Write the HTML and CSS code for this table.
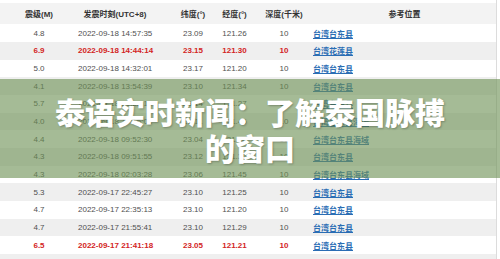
FILE: index.html
```html
<!DOCTYPE html>
<html lang="zh-CN">
<head>
<meta charset="utf-8">
<title>泰语实时新闻</title>
<link rel="stylesheet" href="styles.css">
</head>
<body>
<div class="page">
  <div class="quake-table">
    <div class="row head">
      <div class="c">震级(M)</div>
      <div class="c c-time">发震时刻(UTC+8)</div>
      <div class="c">纬度(°)</div>
      <div class="c">经度(°)</div>
      <div class="c">深度(千米)</div>
      <div class="c">参考位置</div>
    </div>
    <div class="row">
      <div class="c">4.8</div><div class="c c-time">2022-09-18 14:57:35</div><div class="c">23.09</div><div class="c">121.26</div><div class="c">10</div><div class="c loc"><a href="#">台湾台东县</a></div>
    </div>
    <div class="row alt hot">
      <div class="c">6.9</div><div class="c c-time">2022-09-18 14:44:14</div><div class="c">23.15</div><div class="c">121.30</div><div class="c">10</div><div class="c loc"><a href="#">台湾花莲县</a></div>
    </div>
    <div class="row">
      <div class="c">5.0</div><div class="c c-time">2022-09-18 14:32:01</div><div class="c">23.17</div><div class="c">121.20</div><div class="c">10</div><div class="c loc"><a href="#">台湾台东县</a></div>
    </div>
    <div class="row alt">
      <div class="c">4.1</div><div class="c c-time">2022-09-18 13:54:39</div><div class="c">23.10</div><div class="c">121.34</div><div class="c">10</div><div class="c loc"><a href="#">台湾台东县</a></div>
    </div>
    <div class="row">
      <div class="c">5.7</div><div class="c c-time">2022-09-18 10:28:11</div><div class="c">23.14</div><div class="c">121.27</div><div class="c">10</div><div class="c loc"><a href="#">台湾台东县</a></div>
    </div>
    <div class="row alt">
      <div class="c">4.0</div><div class="c c-time">2022-09-18 10:16:02</div><div class="c">23.11</div><div class="c">121.46</div><div class="c">10</div><div class="c loc"><a href="#">台湾台东县海域</a></div>
    </div>
    <div class="row">
      <div class="c">4.4</div><div class="c c-time">2022-09-18 09:52:30</div><div class="c">23.04</div><div class="c">121.28</div><div class="c">10</div><div class="c loc"><a href="#">台湾台东县海域</a></div>
    </div>
    <div class="row alt">
      <div class="c">4.3</div><div class="c c-time">2022-09-18 09:51:55</div><div class="c">23.12</div><div class="c">121.30</div><div class="c">10</div><div class="c loc"><a href="#">台湾台东县</a></div>
    </div>
    <div class="row">
      <div class="c">4.3</div><div class="c c-time">2022-09-18 02:03:28</div><div class="c">23.06</div><div class="c">121.45</div><div class="c">10</div><div class="c loc"><a href="#">台湾台东县海域</a></div>
    </div>
    <div class="row alt">
      <div class="c">5.3</div><div class="c c-time">2022-09-17 22:45:27</div><div class="c">23.10</div><div class="c">121.25</div><div class="c">10</div><div class="c loc"><a href="#">台湾台东县</a></div>
    </div>
    <div class="row">
      <div class="c">4.7</div><div class="c c-time">2022-09-17 22:35:13</div><div class="c">23.10</div><div class="c">121.20</div><div class="c">10</div><div class="c loc"><a href="#">台湾台东县</a></div>
    </div>
    <div class="row alt">
      <div class="c">4.7</div><div class="c c-time">2022-09-17 21:55:41</div><div class="c">23.10</div><div class="c">121.29</div><div class="c">10</div><div class="c loc"><a href="#">台湾台东县</a></div>
    </div>
    <div class="row hot">
      <div class="c">6.5</div><div class="c c-time">2022-09-17 21:41:18</div><div class="c">23.05</div><div class="c">121.21</div><div class="c">10</div><div class="c loc"><a href="#">台湾台东县</a></div>
    </div>
    <div class="row alt"></div>
  </div>
  <div class="banner">
    <h1 class="banner-title">泰语实时新闻：了解泰国脉搏的窗口</h1>
  </div>
</div>
</body>
</html>
```

FILE: styles.css
```css
html, body {
  margin: 0;
  padding: 0;
  background: #fff;
}

body {
  width: 500px;
  height: 259px;
  overflow: hidden;
  font-family: "Liberation Sans", "Noto Sans CJK SC", sans-serif;
  font-size: 8px;
  color: #505050;
}

.page {
  position: relative;
  width: 500px;
  height: 259px;
  overflow: hidden;
}

.quake-table {
  width: 496px;
  padding-top: 3px;
  border-right: 1px solid #dcdcdc;
}

.row {
  display: grid;
  grid-template-columns: 78px 94px 42px 41px 58px 1fr;
  align-items: center;
  height: 17.7px;
  background: #fff;
}

.row.alt {
  background: #efefef;
}

.row.head {
  height: 21.2px;
  background: #f3f3f3;
  color: #333;
  font-weight: bold;
}

.c {
  text-align: center;
  white-space: nowrap;
}

.c-time {
  padding-right: 20px;
}

.c.loc {
  text-align: left;
}

.row.head .c.loc {
  text-align: center;
}

.loc a {
  color: #2a6db4;
  font-weight: bold;
  text-decoration: underline;
}

.row.hot {
  color: #d32424;
  font-weight: bold;
}

.banner {
  position: absolute;
  left: 0;
  top: 79px;
  width: 500px;
  height: 99px;
  background: rgba(110, 145, 85, 0.62);
  display: flex;
  align-items: center;
  justify-content: center;
}

.banner-title {
  margin: 0;
  width: 400px;
  text-align: center;
  font-family: "Noto Sans CJK SC", sans-serif;
  font-weight: 900;
  font-size: 30px;
  line-height: 36px;
  color: #fff;
  text-shadow: 1px 1px 2px rgba(0, 0, 0, 0.25);
}
```
